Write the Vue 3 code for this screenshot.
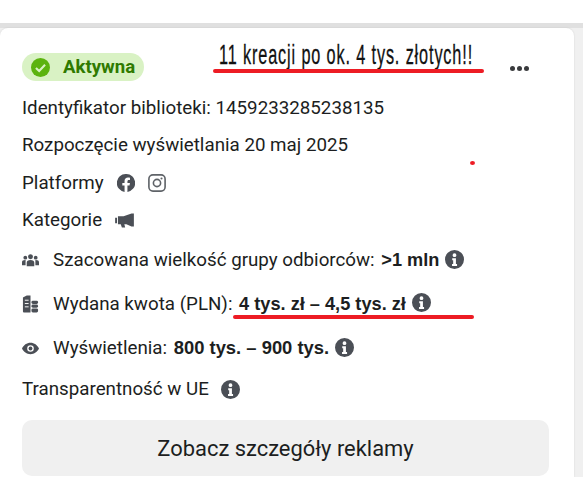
<script setup>
const infoPath = 'M10 0a10 10 0 1 0 0 20a10 10 0 0 0 0-20zM10 3.400a2 2 0 1 1 0 4a2 2 0 0 1 0-4zM7.600 8.800h3.900v6h1.200v2H7.400v-2h1.200v-4h-1z'
</script>

<template>
  <div class="page">
    <div class="band">
      <section class="card">
        <header class="head">
          <div class="badge">
            <svg class="check" viewBox="0 0 20 20"><circle cx="10" cy="10" r="10" fill="#5cb30f"/><path d="M5.200 10.400l3.400 3.300l6.200-6.600" fill="none" stroke="#d9f2c4" stroke-width="2.200"/></svg>
            <span>Aktywna</span>
          </div>
          <div class="dots"><i></i><i></i><i></i></div>
        </header>

        <div class="row r-id">Identyfikator biblioteki: 1459233285238135</div>
        <div class="row r-start">Rozpoczęcie wyświetlania 20 maj 2025</div>
        <div class="row r-plat">
          <span>Platformy</span>
          <svg class="ic fb" viewBox="0 0 20 20"><path fill="#4b4f56" d="M10 0a10 10 0 0 0-1.600 19.900v-7H5.900V10h2.500V7.800c0-2.500 1.500-3.900 3.800-3.900c1.100 0 2.200.2 2.200.2v2.500h-1.200c-1.200 0-1.600.8-1.600 1.600V10h2.800l-.5 2.900h-2.300v7A10 10 0 0 0 10 0z"/></svg>
          <svg class="ic ig" viewBox="0 0 20 20"><rect x="1" y="1" width="18" height="18" rx="4.500" fill="none" stroke="#5f6368" stroke-width="1.800"/><circle cx="10" cy="10" r="4" fill="none" stroke="#5f6368" stroke-width="1.800"/><circle cx="15" cy="5" r="1.200" fill="#5f6368"/></svg>
        </div>
        <div class="row r-cat">
          <span>Kategorie</span>
          <svg class="ic mega" viewBox="0 0 20 16"><path fill="#4b4f56" d="M0 5h2v6H0zM3 3.500h6L17.500.5H20v14h-2.500L12 12H9.800l.9 3.500H7.200L6 12H3z"/></svg>
        </div>
        <div class="row r-aud">
          <svg class="lead" viewBox="0 0 18 14"><g fill="#4b4f56"><circle cx="9" cy="3" r="2.600"/><circle cx="3.500" cy="4" r="2"/><circle cx="14.500" cy="4" r="2"/><path d="M5 13V9.500C5 7.500 6.500 6.500 9 6.500s4 1 4 3V13zM0 12V9c0-1.500 1-2.400 3.500-2.400l.4.100C3.800 7.500 3.800 8.500 3.800 12zM18 12V9c0-1.500-1-2.400-3.500-2.400l-.4.100c.1.800.1 1.800.1 5.300z"/></g></svg>
          <span>Szacowana wielkość grupy odbiorców: <b>&gt;1 mln</b></span>
          <svg class="ic info" viewBox="0 0 20 20"><path :d="infoPath" fill="#4b4f56" fill-rule="evenodd"/></svg>
        </div>
        <div class="row r-spend">
          <svg class="lead coins" viewBox="0 0 18 18"><g fill="#4b4f56"><path d="M1 2L5 0h4v18H2a1 1 0 0 1-1-1z"/><rect x="10" y="5.500" width="7" height="3.400" rx="1.500"/><rect x="10" y="9.600" width="7" height="3.400" rx="1.500"/><rect x="10" y="13.700" width="7" height="4.300" rx="1.500"/></g><path d="M3 5h4M3 8.500h4M3 12h4" stroke="#fff" stroke-width="1"/></svg>
          <span>Wydana kwota (PLN): <b>4 tys. zł – 4,5 tys. zł</b></span>
          <svg class="ic info spendinfo" viewBox="0 0 20 20"><path :d="infoPath" fill="#4b4f56" fill-rule="evenodd"/></svg>
        </div>
        <div class="row r-views">
          <svg class="lead" viewBox="0 0 18 12"><path fill="#4b4f56" fill-rule="evenodd" d="M9 0c4 0 7.300 2.500 9 6c-1.700 3.500-5 6-9 6S1.700 9.500 0 6c1.700-3.500 5-6 9-6zM9 2.500a3.500 3.500 0 1 0 0 7a3.500 3.500 0 0 0 0-7z"/><circle cx="9" cy="6" r="2" fill="#4b4f56"/></svg>
          <span>Wyświetlenia: <b class="views-b">800 tys. – 900 tys.</b></span>
          <svg class="ic info" viewBox="0 0 20 20"><path :d="infoPath" fill="#4b4f56" fill-rule="evenodd"/></svg>
        </div>
        <div class="row r-eu">
          <span>Transparentność w UE</span>
          <svg class="ic info eu" viewBox="0 0 20 20"><path :d="infoPath" fill="#4b4f56" fill-rule="evenodd"/></svg>
        </div>
        <button class="btn" type="button">Zobacz szczegóły reklamy</button>
      </section>
    </div>

    <div class="note"><span>11 kreacji po ok. 4 tys. złotych!!</span></div>
    <div class="line line1"></div>
    <div class="line line2"></div>
    <div class="spot"></div>
  </div>
</template>

<style>
html, body { margin: 0; background: #fff; overflow: hidden; }
</style>

<style scoped>
.page {
  position: relative;
  width: 583px;
  height: 477px;
  overflow: hidden;
  padding-top: 23px;
  box-sizing: border-box;
  background: #fff;
  font-family: Roboto, "Liberation Sans", sans-serif;
  color: #1c1e21;
}
.band {
  height: 454px;
  box-sizing: border-box;
  border-top: 5px solid #e0e0e0;
  background: #f0f0f0;
}
.card {
  width: 574px;
  height: 449px;
  box-sizing: border-box;
  background: #fff;
  border-radius: 8px 8px 0 0;
  box-shadow: 0 0 2px rgba(0, 0, 0, 0.12);
  padding: 25px 0 0 22px;
  display: flex;
  flex-direction: column;
  font-size: 18.75px;
}
.head {
  display: flex;
  align-items: center;
  justify-content: space-between;
  height: 28px;
  width: 507px;
}
.badge {
  display: flex;
  align-items: center;
  height: 28px;
  width: 122px;
  box-sizing: border-box;
  padding-left: 9px;
  gap: 13px;
  border-radius: 14px;
  background: #d9f2c4;
  color: #2f7a00;
  font-weight: 700;
  font-size: 18.6px;
  white-space: nowrap;
}
.check { width: 19px; height: 19px; flex: none; }
.dots { display: flex; gap: 2px; margin-top: 2px; }
.dots i { width: 5px; height: 5px; border-radius: 50%; background: #3a3b3e; display: block; }
.row {
  display: flex;
  align-items: center;
  height: 24px;
  white-space: nowrap;
}
.r-id { margin-top: 15px; }
.r-start { margin-top: 13px; }
.r-plat { margin-top: 14px; }
.r-cat { margin-top: 13px; }
.r-aud { margin-top: 16px; }
.r-spend { margin-top: 20px; }
.r-views { margin-top: 20px; }
.r-eu { margin-top: 17px; }
.row b { font-family: "Liberation Sans", Arial, sans-serif; font-weight: 700; font-size: 18.2px; margin-left: 2px; }
.row .views-b { font-size: 18.4px; }
.lead { width: 17px; height: 15px; margin-right: 14px; flex: none; }
.coins { height: 18px; }
.ic { flex: none; display: block; }
.fb { width: 18px; height: 18px; margin-left: 13px; }
.ig { width: 18px; height: 18px; margin-left: 13px; }
.mega { width: 19px; height: 15px; margin-left: 13px; }
.info { width: 19px; height: 19px; margin-left: 6px; margin-top: -2px; }
.eu { margin-left: 12px; margin-top: 0; }
.spendinfo { margin-top: -4px; }
.btn {
  margin-top: 19px;
  width: 527px;
  height: 56px;
  border: 0;
  border-radius: 10px;
  background: #f0f0f0;
  color: #1c1e21;
  font: 400 21.9px Roboto, "Liberation Sans", sans-serif;
  padding: 0;
}
.note {
  position: absolute;
  left: 219px;
  top: 40px;
  font: 400 28px/30px "Liberation Sans", sans-serif;
  letter-spacing: 1.5px;
  color: #111;
  -webkit-text-stroke: 0.3px #111;
  white-space: nowrap;
}
.note span { display: inline-block; transform: scaleX(0.58); transform-origin: left center; }
.line {
  position: absolute;
  height: 4px;
  border-radius: 2px;
  background: #ed1c24;
}
.line1 { left: 213px; top: 69px; width: 271px; }
.line2 { left: 233px; top: 315px; width: 241px; }
.spot {
  position: absolute;
  left: 470px;
  top: 161px;
  width: 5px;
  height: 4px;
  border-radius: 50%;
  background: #ed1c24;
}
</style>
